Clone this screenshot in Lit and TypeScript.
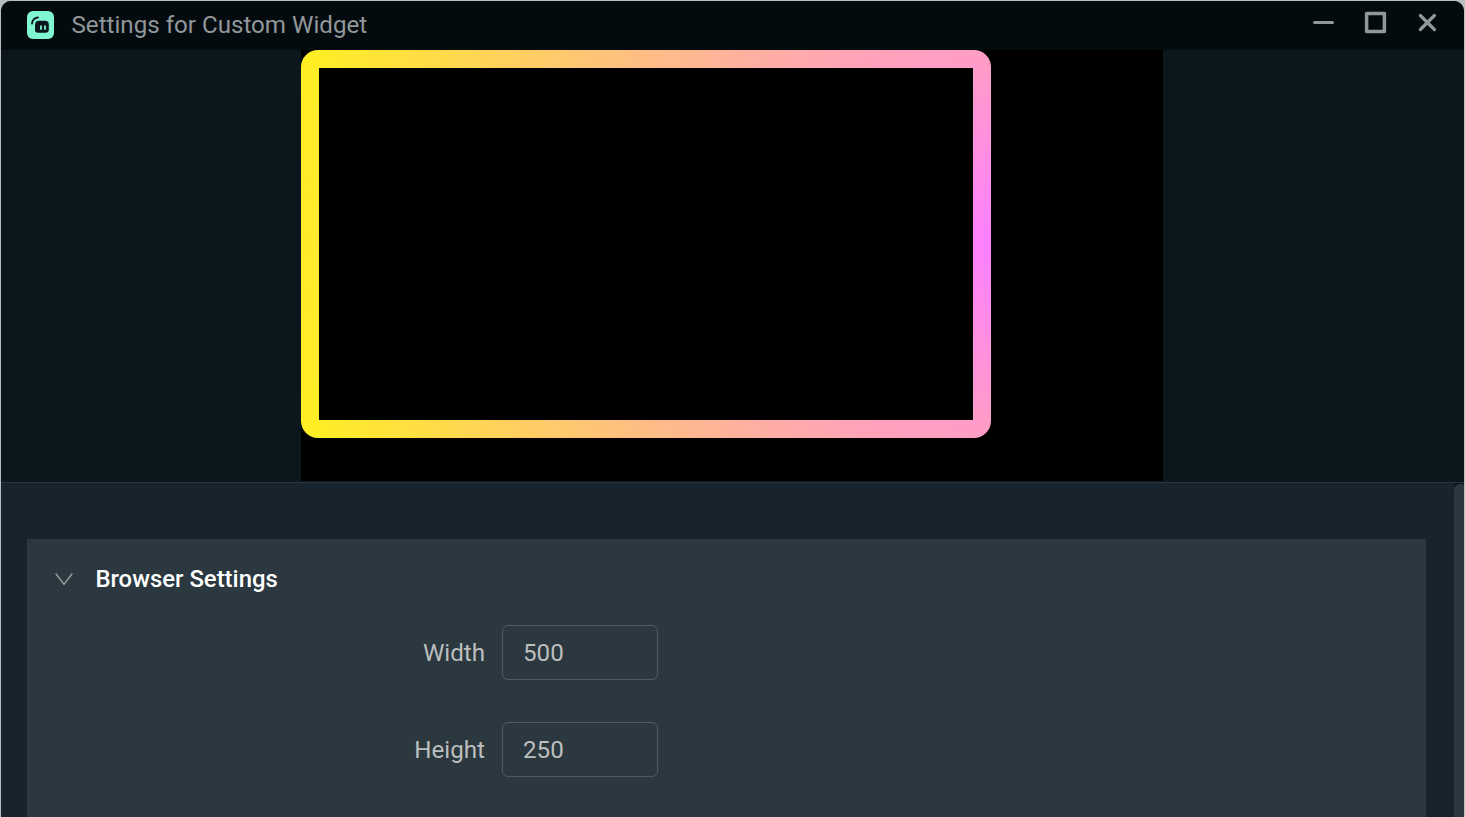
import { LitElement, html, css } from "lit";
import { customElement, property } from "lit/decorators.js";

@customElement("title-bar")
class TitleBar extends LitElement {
  static styles = css`
    :host { display: flex; height: 49px; align-items: flex-start; box-sizing: border-box;
      padding: 0 26px 0 26px; background: #040b0f; color: #91979a; }
    .logo { width: 27px; height: 28px; flex: none; margin-top: 10px; }
    .title { flex: 1; margin-left: 17.5px; font-size: 24.15px; line-height: 49px; white-space: nowrap; }
    .controls { display: flex; height: 48px; align-items: flex-start; padding-top: 19px; box-sizing: border-box; }
    .controls svg { display: block; width: 22px; height: 22px; margin-left: 30px; }
  `;
  render() {
    return html`
      <svg class="logo" viewBox="0 0 27 28">
        <rect width="27" height="28" rx="6" fill="#80f5d2" />
        <path d="M5 12.6 C5.3 9.4 7.4 7 11 6.4" fill="none" stroke="#09161d" stroke-width="1.8" stroke-linecap="round" />
        <path d="M12 9.7 H18 Q21.8 9.7 21.8 13.5 V18.5 Q21.8 21.8 18.5 21.8 H10.8 Q8 21.8 8 19 V14 Q8 9.7 12 9.7Z" fill="#09161d" />
        <path d="M14 15.2V18 M18 15.2V18" stroke="#80f5d2" stroke-width="1.8" stroke-linecap="round" />
      </svg>
      <div class="title">Settings for Custom Widget</div>
      <div class="controls">
        <svg viewBox="0 0 22 22" fill="none" stroke="#91979a"><path d="M2.5 2.5H20.5" stroke-width="3" stroke-linecap="round" /></svg>
        <svg viewBox="0 0 22 22" fill="none" stroke="#91979a" overflow="visible"><rect x="2.6" y="-6.4" width="17.8" height="17.8" stroke-width="3.5" stroke-linejoin="round" /></svg>
        <svg viewBox="0 0 22 22" fill="none" stroke="#91979a" overflow="visible"><path d="M4.4 -4.5L18.4 9.5M18.4 -4.5L4.4 9.5" stroke-width="3.2" stroke-linecap="round" /></svg>
      </div>`;
  }
}

@customElement("widget-preview")
class WidgetPreview extends LitElement {
  static styles = css`
    :host { display: flex; height: 433px; box-sizing: border-box; padding-left: 300px;
      background: #0b171c; border-bottom: 1px solid #2a363d; }
    .canvas { width: 862px; height: 431px; background: #000; }
    .frame { width: 690px; height: 388px; box-sizing: border-box; padding: 17.6px; border-radius: 17px;
      background: radial-gradient(circle farthest-corner at 100% 50%, #ff80ff, #fff020); }
    .screen { height: 100%; background: #000; }
  `;
  render() {
    return html`<div class="canvas"><div class="frame"><div class="screen"></div></div></div>`;
  }
}

@customElement("number-field")
class NumberField extends LitElement {
  @property() label = "";
  @property() value = "";
  static styles = css`
    :host { display: grid; grid-template-columns: 458px 156px; column-gap: 17px; height: 55px; align-items: center; }
    .label { text-align: right; font-size: 24.15px; color: #bdbebe; }
    .box { box-sizing: border-box; width: 156px; height: 55px; padding: 0 20px; border: 1px solid #4f5b61;
      border-radius: 6px; background: transparent; font: 24.15px Roboto, sans-serif; color: #bdbebe; outline: none; }
  `;
  render() {
    return html`<span class="label">${this.label}</span>
      <input class="box" aria-label=${this.label} .value=${this.value} />`;
  }
}

@customElement("app-root")
class AppRoot extends LitElement {
  static styles = css`
    :host { display: block; width: 1465px; height: 817px; overflow: hidden; box-sizing: border-box;
      background: #b8bebe; font-family: Roboto, sans-serif; padding: 1px 1px 0; }
    .window { height: 816px; overflow: hidden; border-radius: 10px 10px 0 0; background: #17242d;
      display: flex; flex-direction: column; }
    .body { flex: 1; display: flex; justify-content: space-between; padding-left: 26px; }
    .panel { width: 1399px; margin-top: 56px; background: #2b383f; }
    .heading { display: flex; align-items: center; height: 80px; padding-left: 28px;
      font-size: 23.9px; font-weight: 500; color: #fff; }
    .chevron { width: 18px; height: 14px; margin-right: 22.4px; }
    .fields { display: flex; flex-direction: column; gap: 42px; padding-top: 6px; }
    .track { width: 10px; background: #0b171c; padding-top: 1px; box-sizing: border-box; display: flex; }
    .thumb { flex: 1; background: #2b383f; border-radius: 6px 2px 0 0; }
  `;
  render() {
    return html`<div class="window">
      <title-bar></title-bar>
      <widget-preview></widget-preview>
      <div class="body">
        <div class="panel">
          <div class="heading">
            <svg class="chevron" viewBox="0 0 18 14" fill="none" stroke="#91979a" stroke-width="1.6"><path d="M.7 1.5L9 12.2L17.3 1.5" /></svg>
            <span>Browser Settings</span>
          </div>
          <div class="fields">
            <number-field label="Width" value="500"></number-field>
            <number-field label="Height" value="250"></number-field>
          </div>
        </div>
        <div class="track"><div class="thumb"></div></div>
      </div>
    </div>`;
  }
}
